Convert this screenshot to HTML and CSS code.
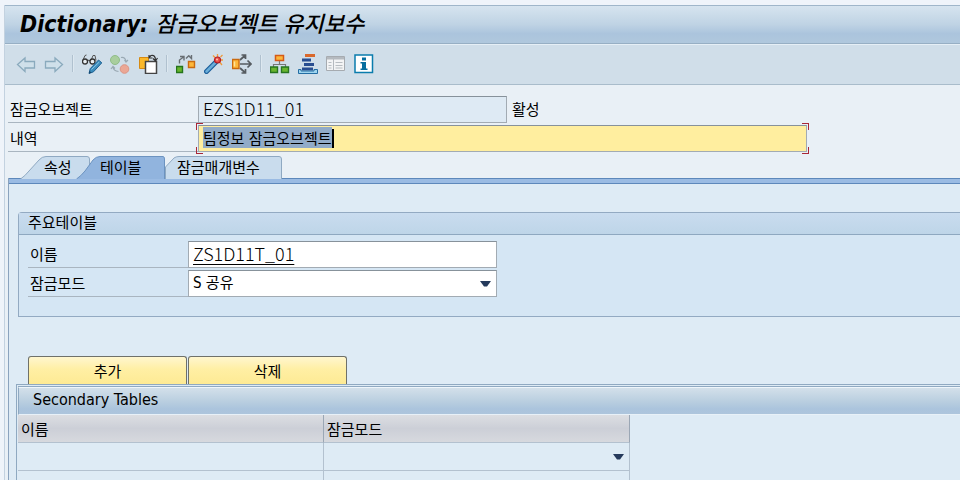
FILE: index.html
```html
<!DOCTYPE html>
<html lang="ko">
<head>
    <meta charset="UTF-8">
    <meta name="viewport" content="width=device-width, initial-scale=1.0">
    <title>Dictionary: 잠금오브젝트 유지보수</title>
    <link rel="stylesheet" href="styles.css">
</head>
<body>
    <div class="window">
        <h1 class="title-bar">Dictionary: <span>잠금오브젝트 유지보수</span></h1>

        <!-- toolbar -->
        <div class="toolbar">
            <button class="tool" aria-label="이전">
                <svg viewBox="0 0 20 20"><path d="M1.5 10.500L9 4v3.500h9.500v6.500H9V17.500z" fill="#cfe0ea" stroke="#8aaabd" stroke-width="1.300"/></svg>
            </button>
            <button class="tool" aria-label="다음">
                <svg viewBox="0 0 20 20"><path d="M18.500 10.500L11 4v3.500H1.500v6.500H11V17.500z" fill="#cfe0ea" stroke="#8aaabd" stroke-width="1.300"/></svg>
            </button>
            <span class="separator"></span>
            <button class="tool" aria-label="조회 / 변경">
                <svg viewBox="0 0 20 20">
                    <path d="M1 6L3 1.500l1.500-.5M9 6.500L11 1.500h2l1 5" fill="none" stroke="#555"/>
                    <circle cx="3" cy="7.500" r="2.500" fill="#e8eef2" stroke="#333" stroke-width="1.300"/>
                    <circle cx="10.500" cy="7.500" r="2.500" fill="#e8eef2" stroke="#333" stroke-width="1.300"/>
                    <path d="M5.500 7q1.200-1.500 2.500 0" fill="none" stroke="#333"/>
                    <path d="M7 19.500l1.200-4.800L16.500 6l3.300 2.800-8.300 9z" fill="#3c8dbd" stroke="#1c5f91"/>
                    <path d="M9.500 15.500L17.300 8" stroke="#8cc5e5"/>
                    <path d="M7 19.500l.7-2.500 1.600 1.600z" fill="#173e5e"/>
                </svg>
            </button>
            <button class="tool" aria-label="활성 / 비활성">
                <svg viewBox="0 0 20 20">
                    <circle cx="5" cy="6" r="4.500" fill="#a9ce9e" stroke="#90bd88"/>
                    <circle cx="14.500" cy="15" r="4.300" fill="#eba795" stroke="#dc9484"/>
                    <path d="M11 3.500q4-1 5 4M14.500 6l1.500 2 2-2M8.500 17.500q-5-.5-5.500-4.500M1 15l2-2.500L5 14.500" fill="none" stroke="#9aa9b3" stroke-width="1.200"/>
                </svg>
            </button>
            <button class="tool" aria-label="다른 오브젝트">
                <svg viewBox="0 0 20 20">
                    <path d="M1.500 3.500h9v11h-9z" fill="#fbb829" stroke="#d68a13"/>
                    <path d="M7.500 7.500h11v12h-11z" fill="#fff" stroke="#444" stroke-width="1.500"/>
                    <path d="M11 3.500l2-2q4.500-1 4.500 5M15 4.500l2.500 2.500L19.500 4M11 1v3h3.500" fill="none" stroke="#333" stroke-width="1.200"/>
                </svg>
            </button>
            <span class="separator"></span>
            <button class="tool" aria-label="점검">
                <svg viewBox="0 0 20 20">
                    <path d="M.5 12.500h6v6h-6z" fill="#67b52c" stroke="#24741c" stroke-width="1.400"/>
                    <path d="M12.500 7.500h6v6h-6z" fill="#fdb73a" stroke="#c96a10" stroke-width="1.400"/>
                    <path d="M3.500 9.500V6l4-3M4 2.500h4v4M10 4.500l3-3M12.500 1.500l3 3V1" fill="none" stroke="#686e73" stroke-width="1.400"/>
                </svg>
            </button>
            <button class="tool" aria-label="활성화">
                <svg viewBox="0 0 20 20">
                    <path d="M13.500 0v3M19 6h-3M9 1.500l2.500 2.500M18.500 1L16.500 3M18 11l-2-2.500" stroke="#ef9a3c" stroke-width="1.300"/>
                    <path d="M2.500 17.500L12 8" stroke="#1d5f9b" stroke-width="5" stroke-linecap="round"/>
                    <path d="M2.500 17.500L11 9" stroke="#69add9" stroke-width="2.600" stroke-linecap="round"/>
                    <circle cx="13.500" cy="6" r="3" fill="#ec514a" stroke="#b51e26" stroke-width="1.200"/>
                    <circle cx="13" cy="5.500" r="1" fill="#ffc6ae"/>
                </svg>
            </button>
            <button class="tool" aria-label="사용처 목록">
                <svg viewBox="0 0 20 20">
                    <path d="M8 10h11M15.500 6.500L19 10l-3.500 3.500M8 6l5-4.500M9.500 1h4v4M8 14l5 4.500M9.500 19h4v-4" fill="none" stroke="#565c61" stroke-width="1.700"/>
                    <path d="M.5 5.500h6.500v9H.500z" fill="#fdb73a" stroke="#c96a10" stroke-width="1.400"/>
                    <path d="M2.500 7.500v5" stroke="#ffe29a" stroke-width="1.500"/>
                </svg>
            </button>
            <span class="separator"></span>
            <button class="tool" aria-label="오브젝트 계층">
                <svg viewBox="0 0 20 20">
                    <path d="M9.500 7v3M3.500 13v-2.500h12V13" fill="none" stroke="#777" stroke-width="1.200"/>
                    <path d="M5.500 1.500h8v5h-8z" fill="#fbb73c" stroke="#d55a16" stroke-width="1.500"/>
                    <path d="M.5 13h7v5.500h-7zM11.500 13h7v5.500h-7z" fill="#69b52f" stroke="#277521" stroke-width="1.400"/>
                </svg>
            </button>
            <button class="tool" aria-label="스택">
                <svg viewBox="0 0 20 20">
                    <path d="M7 0h10v3H7z" fill="#d9682c"/>
                    <path d="M4 4.500h9v3H4zM6 9h10v3H6zM4 13.500h11v3H4z" fill="#294e91"/>
                    <path d="M.5 18v-2.500H3v1.500h13v-1.500h3.500v4H.5z" fill="#9fd5ef" stroke="#236da3"/>
                </svg>
            </button>
            <button class="tool" aria-label="목록">
                <svg viewBox="0 0 20 20">
                    <path d="M.5 2.500h18v14H.5z" fill="#f3f4f5" stroke="#a6abb0"/>
                    <path d="M1 3h17v2.500H1z" fill="#b5babf"/>
                    <path d="M7.500 5v11" stroke="#b5babf"/>
                    <path d="M2.500 8.500h3M2.500 11.500h3M2.500 14h3M9.500 8.500h7M9.500 11.500h7M9.500 14h7" stroke="#b8bdc2" stroke-width="1.200"/>
                </svg>
            </button>
            <button class="tool" aria-label="정보">
                <svg viewBox="0 0 20 20">
                    <path d="M1 1h17.500v17.500H1z" fill="#fff" stroke="#0a7cad" stroke-width="1.500"/>
                    <path d="M8 3.500h4v3H8zM6.500 8H12v6.500h1.500V16h-7v-1.500H8v-5H6.500z" fill="#066e9f"/>
                </svg>
            </button>
        </div>

        <!-- object header -->
        <form class="header-fields">
            <div class="row">
                <label for="object">잠금오브젝트</label>
                <input type="text" id="object" class="field code" value="EZS1D11_01" readonly>
                <span class="status">활성</span>
            </div>
            <div class="row">
                <label for="description">내역</label>
                <div class="focus-frame">
                    <input type="text" id="description" class="field active" value="팀정보 잠금오브젝트">
                    <span class="caret"></span>
                    <span class="corner top-left"></span>
                    <span class="corner top-right"></span>
                    <span class="corner bottom-left"></span>
                    <span class="corner bottom-right"></span>
                </div>
            </div>
        </form>

        <div class="tabs" role="tablist">
            <button class="tab tab-first" role="tab">
                <svg viewBox="0 0 78 23"><path d="M.5 23Q5 20 9 15L19 4Q22 .5 26 .5H67Q69.500 .5 69.500 3V23"/></svg>
                <span>속성</span>
            </button>
            <button class="tab tab-selected" role="tab" aria-selected="true">
                <svg viewBox="0 0 90 23"><path d="M.5 23Q5 20 9 15L17 4Q20 .5 24 .5H87Q88.500 .5 88.500 3V23"/></svg>
                <span>테이블</span>
            </button>
            <button class="tab tab-last" role="tab">
                <svg viewBox="0 0 117 23"><path d="M.5 23V11L9 2Q11 .5 14 .5H114Q116.500 .5 116.500 3V23"/></svg>
                <span>잠금매개변수</span>
            </button>
        </div>

        <div class="panel">
            <section class="group">
                <h2>주요테이블</h2>
                <div class="group-body">
                    <div class="row">
                        <label for="name">이름</label>
                        <input type="text" id="name" class="field code linked" value="ZS1D11T_01">
                    </div>
                    <div class="row">
                        <label for="mode">잠금모드</label>
                        <select id="mode" class="field"><option>S 공유</option></select>
                    </div>
                </div>
            </section>

            <div class="actions">
                <button>추가</button>
                <button>삭제</button>
            </div>

            <section class="secondary">
                <div class="secondary-inner">
                    <h2>Secondary Tables</h2>
                    <table>
                        <thead>
                            <tr><th>이름</th><th>잠금모드</th></tr>
                        </thead>
                        <tbody>
                            <tr>
                                <td></td>
                                <td><select aria-label="잠금모드"><option></option></select></td>
                            </tr>
                            <tr><td></td><td></td></tr>
                        </tbody>
                    </table>
                </div>
            </section>
        </div>
    </div>
    <script>
        document.getElementById('description').select();
    </script>
</body>
</html>
```

FILE: styles.css
```css
* {
    box-sizing: border-box;
}

body {
    margin: 0;
    height: 100vh;
    overflow: hidden;
    background: #eff4fa;
    color: #000;
    font-family: "DejaVu Sans Condensed", "Noto Sans CJK KR", sans-serif;
    font-size: 15px;
}

button, input, select {
    font: inherit;
    color: inherit;
    border-radius: 0;
    outline: none;
}

.window {
    margin: 5px 0 0 4px;
    min-height: 100vh;
    border-left: 1px solid #c3d2e0;
    background: #e9f0f6;
}

/* title and toolbar */
.title-bar {
    margin: 0;
    height: 39px;
    padding-left: 15px;
    border-top: 1px solid #9fb6ca;
    border-bottom: 1px solid #97afc4;
    background: linear-gradient(#d6e4ef, #bfd3e4 50%, #abc4dd 75%, #b0c8dd);
    font-size: 23px;
    font-style: italic;
    font-weight: bold;
    line-height: 37px;
    white-space: nowrap;
}

.title-bar span {
    font-size: 22px;
    font-weight: 500;
}

.toolbar {
    display: flex;
    align-items: center;
    gap: 8px;
    height: 41px;
    padding: 0 0 2px 11px;
    border-top: 1px solid #e6eff6;
    border-bottom: 1px solid #a9bccb;
    background: #d0dee9;
}

.tool {
    width: 20px;
    height: 20px;
    padding: 0;
    border: 0;
    background: none;
}

.tool svg {
    display: block;
    width: 20px;
    height: 20px;
}

.separator {
    width: 2px;
    height: 17px;
    border-left: 1px solid #b0c1cf;
    border-right: 1px solid #dde8f0;
}

/* form rows */
.header-fields {
    padding: 11px 0 0 3px;
}

.row {
    display: flex;
    height: 29px;
}

.row label {
    flex: none;
    width: 190px;
    height: 27px;
    padding-left: 2px;
    border-bottom: 1px solid #a9b5c0;
    line-height: 28px;
}

.field {
    width: 309px;
    height: 27px;
    padding: 0 4px 2px;
    border: 1px solid #a2abb3;
    border-top-color: #87929b;
    background-color: #fff;
}

.field[readonly] {
    background-color: #deeaf4;
}

.code {
    padding-bottom: 4px;
    font-family: "Noto Sans CJK KR", sans-serif;
    font-size: 18px;
    font-weight: 300;
}

.linked {
    text-decoration: underline;
    text-underline-offset: 3px;
}

.status {
    padding-left: 5px;
    line-height: 28px;
}

.focus-frame {
    position: relative;
    height: 27px;
}

.active {
    display: block;
    width: 609px;
    background-color: #ffee9f;
}

.active::selection {
    background: #91abc8;
    color: #000;
}

.caret {
    position: absolute;
    left: 134px;
    top: 4px;
    width: 2px;
    height: 19px;
    background: #000;
}

.corner {
    position: absolute;
    width: 7px;
    height: 7px;
    border: 0 solid #a82736;
}

.top-left {
    left: -2px;
    top: -2px;
    border-width: 1px 0 0 1px;
}

.top-right {
    right: -2px;
    top: -2px;
    border-width: 1px 1px 0 0;
}

.bottom-left {
    left: -2px;
    bottom: -2px;
    border-width: 0 0 1px 1px;
}

.bottom-right {
    right: -2px;
    bottom: -2px;
    border-width: 0 1px 1px 0;
}

/* tabs */
.tabs {
    display: flex;
    padding: 2px 0 0 15px;
}

.tab {
    position: relative;
    height: 22px;
    padding: 0;
    border: 0;
    background: none;
    line-height: 24px;
    text-align: left;
    white-space: nowrap;
}

.tab svg {
    position: absolute;
    left: 0;
    top: 0;
    height: 23px;
    fill: #c9dced;
    stroke: #8fa9c2;
}

.tab span {
    position: relative;
}

.tab-first {
    width: 78px;
    padding-left: 24px;
}

.tab-selected {
    z-index: 1;
    width: 90px;
    margin-left: -22px;
    padding-left: 24px;
}

.tab-selected svg {
    fill: #91b4de;
    stroke: #6c93c0;
}

.tab-last {
    width: 117px;
    margin-left: -1px;
    padding-left: 12px;
}

.panel {
    margin-left: 3px;
    border-left: 1px solid #8ba3be;
    background: #deebf5;
}

.panel::before {
    content: "";
    display: block;
    height: 4px;
    border-top: 1px solid #5d88bb;
    border-bottom: 1px solid #5d88bb;
    background: #9abbe3;
}

/* main table */
.group {
    margin: 30px 0 0 9px;
    border: 1px solid #93aac2;
    border-right: 0;
    border-top-left-radius: 4px;
    background: #d5e6f4;
}

.panel .group {
    margin-top: 28px;
}

.group h2 {
    margin: 0;
    height: 22px;
    padding-left: 9px;
    border-bottom: 1px solid #8ea8c0;
    background: linear-gradient(#c9dcef, #bed5e8);
    font-size: 15px;
    font-weight: normal;
    line-height: 20px;
}

.group-body {
    padding: 6px 0 17px 9px;
}

.group .row label {
    width: 160px;
}

select {
    appearance: none;
    background: #fff url("data:image/svg+xml,%3Csvg xmlns='http://www.w3.org/2000/svg' width='11' height='6'%3E%3Cpath d='M0 0h11L7 5.500H4z' fill='%23253a5c'/%3E%3C/svg%3E") no-repeat right 5px center;
}

/* buttons over the secondary table */
.actions {
    display: flex;
    gap: 1px;
    padding: 39px 0 0 19px;
}

.actions button {
    width: 159px;
    height: 28px;
    padding: 0;
    border: 1px solid #6f716a;
    border-bottom: 0;
    border-radius: 3px 3px 0 0;
    background: linear-gradient(#fff6cf, #ffefa4 45%, #fdea94);
}

.secondary {
    margin-left: 7px;
    padding: 1px 0 0 1px;
    border-top: 1px solid #8fa9c1;
    border-left: 1px solid #8fa9c1;
}

.secondary-inner {
    border-top: 1px solid #8fa9c1;
}

.secondary h2 {
    margin: 0;
    height: 28px;
    padding-left: 14px;
    border-top: 1px solid #eef5fa;
    border-left: 1px solid #8fa9c1;
    border-bottom: 1px solid #e8f1f8;
    background: linear-gradient(#d3e0ea, #bacfe0 50%, #abc4dd 80%, #adc5dc);
    font-size: 16px;
    font-weight: normal;
    line-height: 24px;
}

table {
    width: 612px;
    border-collapse: separate;
    border-spacing: 0;
    table-layout: fixed;
}

th, td {
    height: 28px;
    padding: 0;
    border-right: 1px solid #b3c1cf;
    border-bottom: 1px solid #b3c1cf;
}

th {
    padding-left: 3px;
    border-right-color: #9ba7b5;
    background: linear-gradient(#dcdee2, #cccfd7 50%, #d7d9de);
    font-weight: normal;
    text-align: left;
}

td select {
    display: block;
    width: 100%;
    height: 27px;
    border: 0;
    background-color: transparent;
}
```
